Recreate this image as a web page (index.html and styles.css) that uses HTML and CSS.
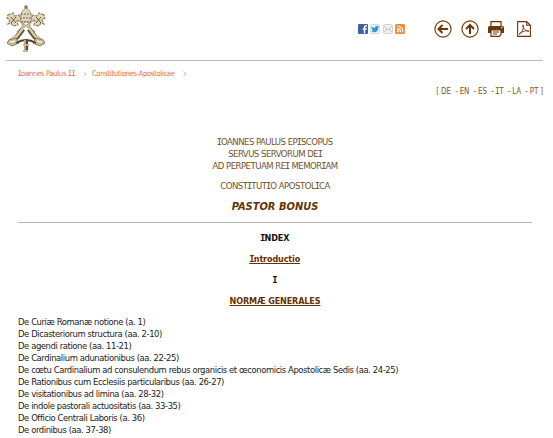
FILE: index.html
```html
<!DOCTYPE html>
<html lang="la">
<head>
<meta charset="utf-8">
<title>Pastor Bonus</title>
<link rel="stylesheet" href="styles.css">
</head>
<body>
<header class="top">
  <svg class="crest" width="40" height="50" viewBox="0 0 40 50" fill="none">
    <path d="M9 13 29 27M31 13 11 27" stroke="#c8b794" stroke-width="2"/>
    <g stroke="#8f8062" stroke-width="1.2" fill="#e2d6b8" stroke-dasharray="3 1">
      <path d="M2 10 7 8 9 11 13 10 15 14 11 16 12 20 7 21 5 18 2 19 4 15 1 13Z"/>
      <path d="M38 10 33 8 31 11 27 10 25 14 29 16 28 20 33 21 35 18 38 19 36 15 39 13Z"/>
    </g>
    <path d="M5 12 10 18M10 12 5 18M35 12 30 18M30 12 35 18" stroke="#6b5b3c"/>
    <path d="M15 17C13 9 17 4 20 3 23 4 27 9 25 17Z" fill="#ddd5c2" stroke="#a0937a"/>
    <path d="M20 0V4M18 2H22" stroke="#65563a"/>
    <path d="M15 9H25M14 13H26M15 17H25" stroke="#796642" stroke-dasharray="2 1"/>
    <path d="M17 18 16 24M23 18 24 24" stroke="#b4a68a" stroke-width="2"/>
    <path d="M17 24 11 32 4 37M23 24 29 32 36 37" stroke="#625538" stroke-width="5"/>
    <path d="M17 23 11 31 4 35M23 23 29 31 36 35" stroke="#d8cba9" stroke-width="2.5"/>
    <path d="M3 35 10 33 13 38 6 41 1 38ZM37 35 30 33 27 38 34 41 39 38Z" fill="#d0bf95" stroke="#8b7c5b"/>
    <path d="M4 37 9 36M36 37 31 36" stroke="#fff"/>
    <path d="M10 38Q20 32 30 38" stroke="#4c432d" stroke-width="2"/>
    <path d="M20 35V47" stroke="#544830" stroke-width="4"/>
    <path d="M19 35V46M17 40H23M17 46H22" stroke="#c8b68c" stroke-width="1.8"/>
  </svg>
  <div class="social">
    <svg width="10" height="10" viewBox="0 0 10 10"><rect width="10" height="10" rx="1" fill="#3f62a0"/><path d="M9 2H7.7Q6.5 2 6.5 3.2V9.5M4.8 5H8.7" fill="none" stroke="#fff" stroke-width="1.4"/></svg>
    <svg width="10" height="10" viewBox="0 0 10 10"><rect x=".5" y=".5" width="9" height="9" rx="1" fill="#edf2f4" stroke="#d5dde1"/><path d="M1.5 2.2Q3 4 5 4 5 1.8 6.8 1.8L7.7 2.2 9 2 8.3 3.4Q8.2 7.8 4.3 8.2 2.5 8.4 1.3 7.4L3 6.8Q1.8 6 1.8 5.3L2.3 5.2Q1.2 4 1.5 2.2Z" fill="#2799d6"/></svg>
    <svg width="10" height="10" viewBox="0 0 10 10"><rect x=".5" y=".5" width="9" height="9" rx="1" fill="#f0f1f0" stroke="#d3d5d3"/><path d="M1 2 5 6 9 2M1 8.5 3.8 5M9 8.5 6.2 5" fill="none" stroke="#b9bdba" stroke-width=".8"/></svg>
    <svg width="10" height="10" viewBox="0 0 10 10"><rect width="10" height="10" rx="1" fill="#ee9042"/><circle cx="2.9" cy="7.3" r="1" fill="#fff"/><path d="M2 4.6Q5.6 4.7 5.6 8.3M2 2.2Q8 2.2 8 8.3" fill="none" stroke="#fff" stroke-width="1.1"/></svg>
  </div>
  <nav class="tools">
    <svg width="18" height="18" viewBox="0 0 18 18" fill="none" stroke="#6d3605"><circle cx="9" cy="9" r="8.1" stroke-width="1.1"/><path d="M14 9H5M8.5 5 4.5 9 8.5 13" stroke-width="2"/></svg>
    <svg class="up" width="18" height="18" viewBox="0 0 18 18" fill="none" stroke="#6d3605"><circle cx="9" cy="9" r="8.1" stroke-width="1.1"/><path d="M9 14V5M5 9 9 5 13 9" stroke-width="2"/></svg>
    <svg class="print" width="16" height="16" viewBox="0 0 16 16"><path d="M3 5V.7H13V5" fill="#fff" stroke="#6d3605" stroke-width="1.2"/><path d="M1.5 5H14.5Q16 5 16 6.5V12H13V9H3V12H0V6.5Q0 5 1.5 5Z" fill="#6d3605"/><path d="M3 9H13V13.5L11.5 15.3H3ZM5 11H11M5 13H9" fill="#fff" stroke="#6d3605" stroke-width="1.2"/><path d="M13 6.7H14.5" stroke="#fff"/></svg>
    <svg class="pdf" width="14" height="16" viewBox="0 0 14 16" fill="none" stroke="#6d3605"><path d="M.6.6H9.7L13.4 4.3V15.4H.6ZM9.7.6V4.3H13.4" stroke-width="1.1"/><path d="M2 13.2C5 11.8 7.4 6.6 6.1 3.8 5 5 6.7 9.2 12 10.4 9.5 9 5 10.4 2 13.2Z" stroke-width=".9"/></svg>
  </nav>
</header>
<nav class="crumbs">
  <span class="pope"><span class="i">I</span>oannes Paulus <span class="i ii">II</span></span>
  <svg width="4" height="6" viewBox="0 0 4 6"><path d="M.5.5 3 3 .5 5.5" fill="none" stroke="#c6c6c6"/></svg>
  <span>Constitutiones Apostolicae</span>
  <svg width="4" height="6" viewBox="0 0 4 6"><path d="M.5.5 3 3 .5 5.5" fill="none" stroke="#c6c6c6"/></svg>
</nav>
<div class="langs">[ DE&nbsp; - EN&nbsp; - ES&nbsp; - <span class="i">I</span>T&nbsp; - LA&nbsp; - PT ]</div>
<main>
  <p class="intro"><span class="i">I</span>OANNES PAULUS EP<span class="i">I</span>SCOPUS<br>SERVUS SERVORUM DE<span class="i">I</span><br>AD PERPETUAM RE<span class="i">I</span> MEMOR<span class="i">I</span>AM</p>
  <p class="intro kind">CONST<span class="i">I</span>TUT<span class="i">I</span>O APOSTOL<span class="i">I</span>CA</p>
  <h1>PASTOR BONUS</h1>
  <hr>
  <p class="head index"><span class="i">I</span>NDEX</p>
  <p class="head link"><a><span class="i">I</span>ntroductio</a></p>
  <p class="head num"><span class="i">I</span></p>
  <p class="head link norm"><a>NORMÆ GENERALES</a></p>
  <div class="list">
    <div>De Curiæ Romanæ notione (a. 1)</div>
    <div>De Dicasteriorum structura (aa. 2-10)</div>
    <div>De agendi ratione (aa. 11-21)</div>
    <div>De Cardinalium adunationibus (aa. 22-25)</div>
    <div>De cœtu Cardinalium ad consulendum rebus organicis et œconomicis Apostolicæ Sedis (aa. 24-25)</div>
    <div>De Rationibus cum Ecclesiis particularibus (aa. 26-27)</div>
    <div>De visitationibus ad limina (aa. 28-32)</div>
    <div>De indole pastorali actuositatis (aa. 33-35)</div>
    <div>De Officio Centrali Laboris (a. 36)</div>
    <div>De ordinibus (aa. 37-38)</div>
  </div>
</main>
</body>
</html>
```
FILE: styles.css
```css
* { box-sizing: border-box; }
body {
  margin: 0;
  width: 553px;
  height: 438px;
  overflow: hidden;
  background: #fff;
  color: #222;
  font: 9px/12px Tahoma, "DejaVu Sans Condensed", "DejaVu Sans", sans-serif;
  white-space: nowrap;
}
svg { display: block; flex: none; }
p, h1 { margin: 0; font-size: inherit; }
.i {
  margin: 0 -.08em;
  font-family: "DejaVu Sans Mono", monospace;
  line-height: 1;
}
.top {
  display: flex;
  height: 61px;
  margin: 0 10px 0 6px;
  border-bottom: 1px solid #bdbdbd;
}
.crest { margin-top: 5px; }
.social { display: flex; gap: 2.5px; margin: 24px 0 0 311.5px; }
.tools { display: flex; margin: 20px 0 0 28.5px; }
.up { margin-left: 9.5px; }
.print { margin: 1px 0 0 8.5px; }
.pdf { margin: 1px 0 0 13px; }
.crumbs {
  display: flex;
  align-items: center;
  height: 12px;
  margin: 7px 0 0 18px;
  color: #e56f3c;
  font-size: 7.7px;
  letter-spacing: -.36px;
}
.pope { letter-spacing: -.35px; }
.ii { margin: 0 0 0 -.08em; letter-spacing: -.9px; }
.crumbs svg { margin: 0 5px 0 8px; }
.langs {
  margin: 6px 10px 0 0;
  color: #80592e;
  font-size: 8px;
  letter-spacing: -.16px;
  text-align: right;
}
main { margin: 38px 21px 0 18px; text-align: center; }
.intro { color: #74512d; font-size: 9.5px; letter-spacing: -.52px; }
.kind { margin-top: 8px; letter-spacing: -.48px; }
h1 {
  margin-top: 8px;
  color: #663300;
  font-size: 11px;
  line-height: 14px;
  font-style: italic;
}
hr { height: 1px; margin: 8px 0 9px; border: 0; background: #b5b5b5; }
.head { color: #111; font-weight: bold; letter-spacing: -.15px; }
.head + .head { margin-top: 9px; }
.link { color: #663300; }
.link a { text-decoration: underline; }
.list {
  margin-top: 9px;
  font-size: 9.4px;
  letter-spacing: -.41px;
  text-align: left;
}
```
